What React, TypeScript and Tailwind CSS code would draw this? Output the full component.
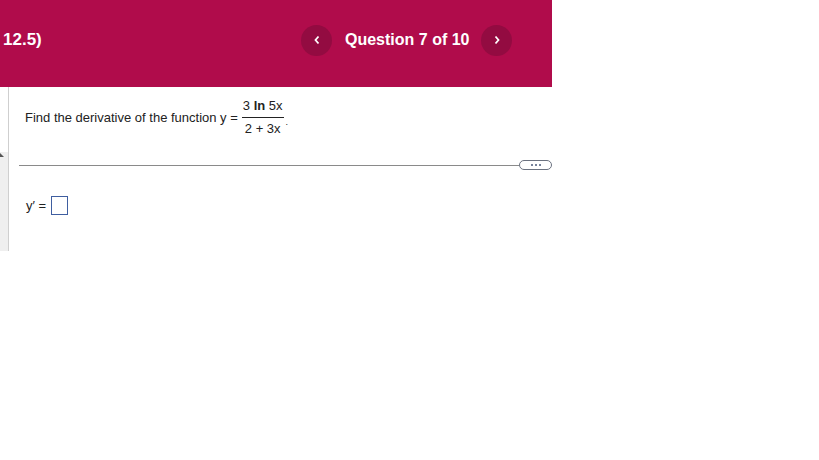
import React from 'react';

// Question player — header bar with nav, question prompt, answer box.

function NavButton({ dir }: { dir: 'prev' | 'next' }) {
  return (
    <button
      type="button"
      className="flex h-[31px] w-[31px] items-center justify-center rounded-full bg-[#930b41] text-white"
    >
      <svg width="8" height="10" viewBox="0 0 8 10" fill="none">
        {dir === 'prev' ? (
          <path d="M5.5 1.5 L2.5 5 L5.5 8.5" stroke="white" strokeWidth="1.8" />
        ) : (
          <path d="M2.5 1.5 L5.5 5 L2.5 8.5" stroke="white" strokeWidth="1.8" />
        )}
      </svg>
    </button>
  );
}

export default function App() {
  return (
    <div
      className="h-[460px] w-[819px] bg-white text-[#222]"
      style={{ fontFamily: '"Liberation Sans", Arial, sans-serif' }}
    >
      <header className="flex h-[87px] w-[552px] items-center bg-[#b00c4b] pb-[7px] text-white">
        <div className="w-[301px] pl-[3px] text-[17px] font-bold">12.5)</div>
        <NavButton dir="prev" />
        <div className="w-[149px] pl-[13px] text-[16px] font-bold">Question 7 of 10</div>
        <NavButton dir="next" />
      </header>

      <div className="flex h-[164px] w-[552px]">
        <div className="flex w-[9px] flex-col border-r border-[#cfcfcf]">
          <div className="h-[65px] bg-white" />
          <div className="relative flex-1 bg-[#efefef]">
            <span className="absolute left-0 top-[1px] h-0 w-0 border-b-[4px] border-r-[4px] border-b-[#555] border-r-transparent" />
          </div>
        </div>

        <div className="flex flex-1 flex-col">
          <div className="flex items-center pl-[16px] pt-[12px] text-[13px]">
            <span>Find the derivative of the function y =</span>
            <span className="ml-[3px] inline-flex flex-col items-center">
              <span className="px-[2px] pb-[4px] leading-[14px]">
                3 <span className="font-bold">ln</span> 5x
              </span>
              <span className="border-t border-[#222] px-[3px] pt-[4px] leading-[14px]">2 + 3x</span>
            </span>
            <span className="ml-[1px] mt-[10px] text-[9px]">.</span>
          </div>

          <div className="mt-[24px] flex items-center pl-[10px]">
            <div className="h-px flex-1 bg-[#8a8a8a]" />
            <button
              type="button"
              className="flex h-[10px] w-[33px] items-center justify-center gap-[2px] rounded-full border border-[#6b7280] bg-white"
            >
              <span className="h-[2px] w-[2px] rounded-full bg-[#4a5a7a]" />
              <span className="h-[2px] w-[2px] rounded-full bg-[#4a5a7a]" />
              <span className="h-[2px] w-[2px] rounded-full bg-[#4a5a7a]" />
            </button>
          </div>

          <div className="mt-[26px] flex items-center pl-[17px] text-[13px]">
            <span>y′ =</span>
            <span className="ml-[5px] h-[19px] w-[17px] border border-[#3f5ea0] bg-white" />
          </div>
        </div>
      </div>
    </div>
  );
}
